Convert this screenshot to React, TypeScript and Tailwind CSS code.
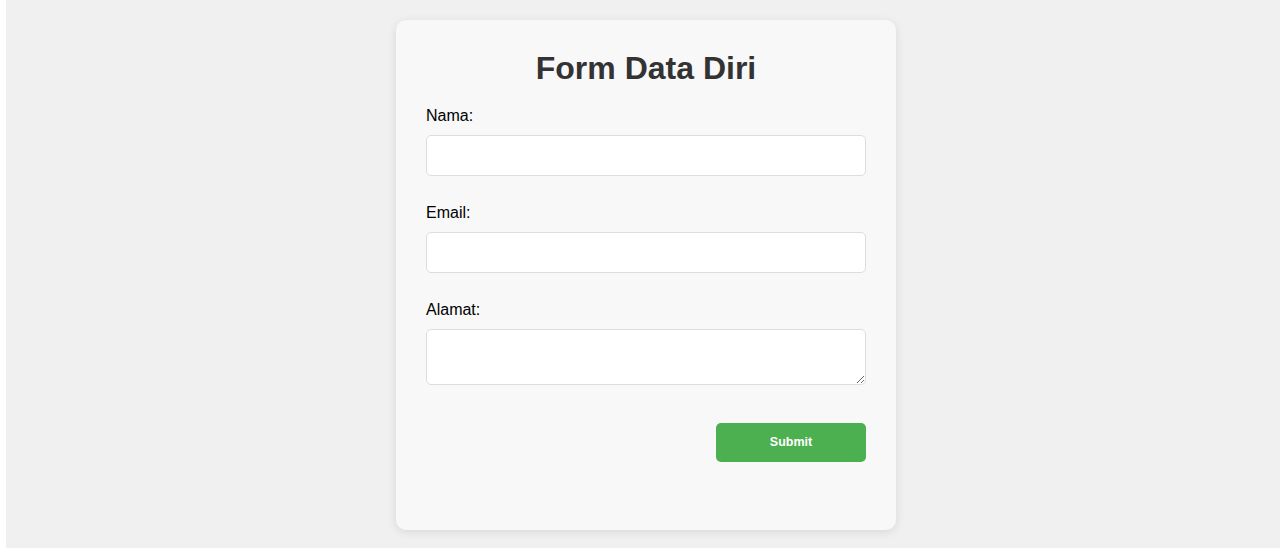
export default function App() {
  return (
    <div className="min-h-screen bg-white pl-[6px] flex" style={{ fontFamily: '"Liberation Sans", Arial, sans-serif' }}>
      <div className="flex-1 bg-[#f0f0f0] flex justify-center pl-[6px] pt-[20px]">
        <div className="w-[500px] h-[510px] bg-[#f8f8f8] rounded-[10px] shadow-[0_2px_10px_rgba(0,0,0,0.1)] px-[30px] pt-[30px]">
          <h1 className="text-[32px] leading-[37px] font-bold text-[#333] text-center mb-[20px]">Form Data Diri</h1>
          <form className="flex flex-col" onSubmit={(e) => e.preventDefault()}>
            <label className="text-[16px] leading-[18px] text-black mb-[10px]">Nama:</label>
            <input type="text" className="h-[41px] w-full bg-white border border-[#ddd] rounded-[5px] mb-[28px] px-[10px] outline-none" />
            <label className="text-[16px] leading-[18px] text-black mb-[10px]">Email:</label>
            <input type="email" className="h-[41px] w-full bg-white border border-[#ddd] rounded-[5px] mb-[28px] px-[10px] outline-none" />
            <label className="text-[16px] leading-[18px] text-black mb-[10px]">Alamat:</label>
            <textarea className="h-[56px] w-full bg-white border border-[#ddd] rounded-[5px] mb-[38px] px-[10px] py-[8px] outline-none block" />
            <div className="flex justify-end">
              <button type="submit" className="w-[150px] h-[39px] bg-[#4caf50] text-white rounded-[5px] text-[12.5px] font-bold">Submit</button>
            </div>
          </form>
        </div>
      </div>
    </div>
  );
}
